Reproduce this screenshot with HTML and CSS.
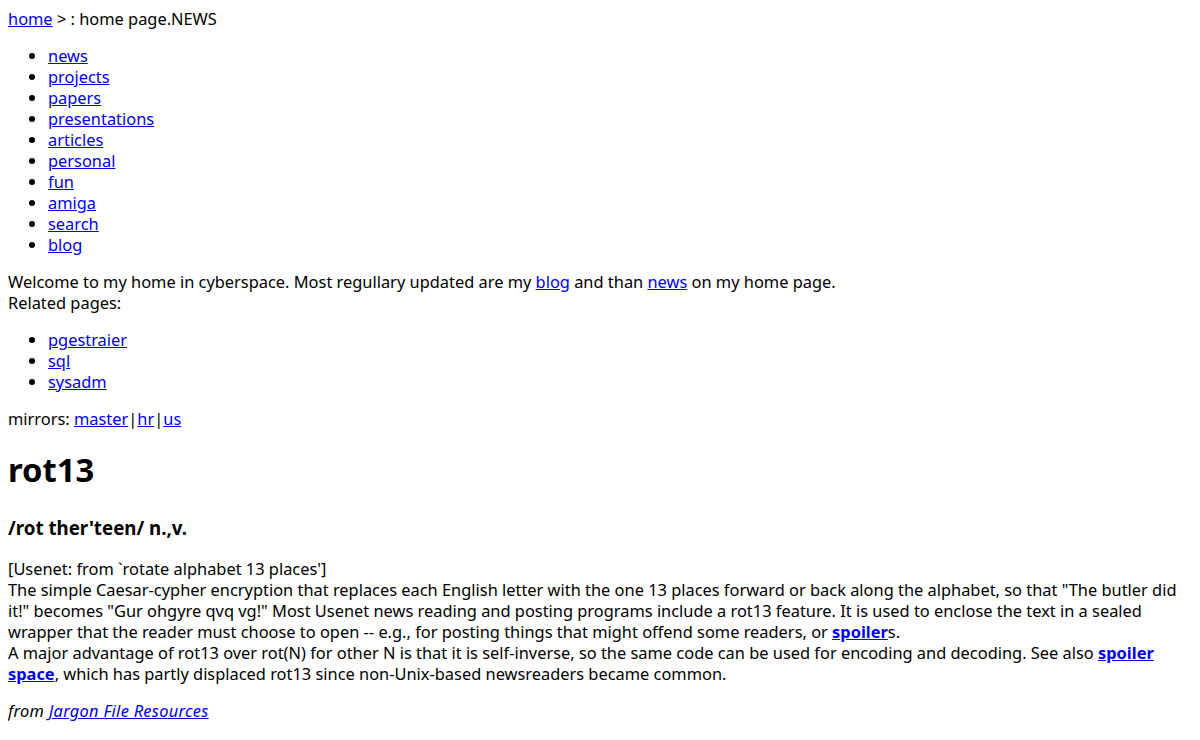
FILE: index.html
```html
<!DOCTYPE html>
<html lang="en">
<head>
  <meta charset="UTF-8" />
  <title>rot13</title>
  <link rel="stylesheet" href="styles.css">
</head>
<body>
  <div class="crumbs"><a href="#">home</a> &gt; : home page.NEWS</div>
  <ul class="menu">
    <li><a href="#">news</a></li>
    <li><a href="#">projects</a></li>
    <li><a href="#">papers</a></li>
    <li><a href="#">presentations</a></li>
    <li><a href="#">articles</a></li>
    <li><a href="#">personal</a></li>
    <li><a href="#">fun</a></li>
    <li><a href="#">amiga</a></li>
    <li><a href="#">search</a></li>
    <li><a href="#">blog</a></li>
  </ul>
  <p>Welcome to my home in cyberspace. Most regullary updated are my <a href="#">blog</a> and than <a href="#">news</a> on my home page.<br>
  Related pages:</p>
  <ul>
    <li><a href="#">pgestraier</a></li>
    <li><a href="#">sql</a></li>
    <li><a href="#">sysadm</a></li>
  </ul>
  <p>mirrors: <a href="#">master</a>|<a href="#">hr</a>|<a href="#">us</a></p>

  <h1>rot13</h1>
  <h3>/rot ther'teen/ n.,v.</h3>
  <p>[Usenet: from `rotate alphabet 13 places']<br>
  The simple Caesar-cypher encryption that replaces each English letter with the one 13 places forward or back along the alphabet, so that "The butler did it!" becomes "Gur ohgyre qvq vg!" Most Usenet news reading and posting programs include a rot13 feature. It is used to enclose the text in a sealed wrapper that the reader must choose to open -- e.g., for posting things that might offend some readers, or <a class="term" href="#">spoiler</a>s.<br>
  A major advantage of rot13 over rot(N) for other N is that it is self-inverse, so the same code can be used for encoding and decoding. See also <a class="term" href="#">spoiler space</a>, which has partly displaced rot13 since non-Unix-based newsreaders became common.</p>
  <p class="source">from <a href="#">Jargon File Resources</a></p>
</body>
</html>
```

FILE: styles.css
```css
body {
  margin: 8px;
  font-family: "Noto Sans", "Open Sans", sans-serif;
  font-size: 16.4px;
  line-height: 21px;
  color: #000;
  background: #fff;
}

a {
  color: #0000ee;
}

p, ul {
  margin: 16px 0;
}

ul {
  padding-left: 40px;
}

h1 {
  font-size: 32.8px;
  line-height: 42px;
  margin: 20px 0 24px;
}

h3 {
  font-size: 18.7px;
  line-height: 25px;
  margin: 18px 0;
}

.term {
  font-weight: bold;
}

.source {
  font-style: italic;
  letter-spacing: 0.3px;
}
```
